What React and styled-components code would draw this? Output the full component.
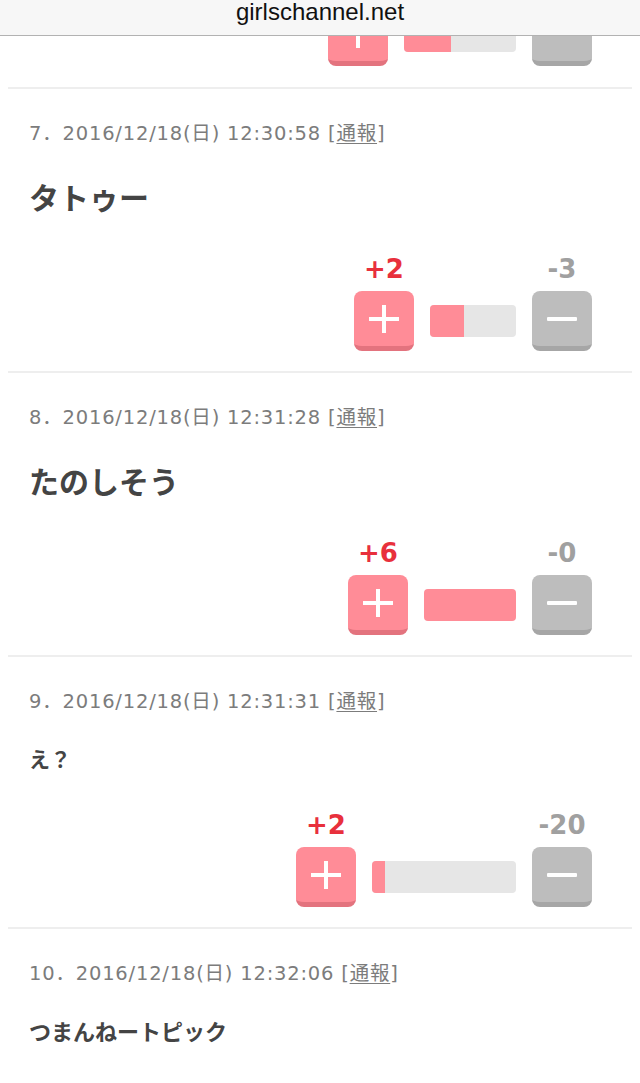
import { createGlobalStyle, styled } from "styled-components";

const comments = [
  { no: 7, time: "2016/12/18(日) 12:30:58", body: "タトゥー", size: 30, plus: 2, minus: 3, bar: 86 },
  { no: 8, time: "2016/12/18(日) 12:31:28", body: "たのしそう", size: 30, plus: 6, minus: 0, bar: 92 },
  { no: 9, time: "2016/12/18(日) 12:31:31", body: "え？", size: 21, plus: 2, minus: 20, bar: 144 },
  { no: 10, time: "2016/12/18(日) 12:32:06", body: "つまんねートピック", size: 22 },
];

const PlusIcon = () => (
  <svg width="30" height="28" viewBox="0 0 30 28">
    <rect x="0" y="12" width="30" height="4" fill="#fff" />
    <rect x="13" y="0" width="4" height="28" fill="#fff" />
  </svg>
);

const MinusIcon = () => (
  <svg width="30" height="4" viewBox="0 0 30 4">
    <rect x="0" y="0" width="30" height="4" rx="1" fill="#fff" />
  </svg>
);

const Votes = ({ plus, minus, bar }) => {
  const total = plus + minus;
  const pct = total === 0 ? 50 : (plus / total) * 100;
  return (
    <StVoteRow>
      <StVoteGroup>
        <StCount $plus>+{plus}</StCount>
        <StVoteBtn $plus>
          <PlusIcon />
        </StVoteBtn>
      </StVoteGroup>
      <StBar style={{ width: bar }}>
        <StBarFill style={{ width: `${pct}%` }} />
      </StBar>
      <StVoteGroup>
        <StCount>-{minus}</StCount>
        <StVoteBtn>
          <MinusIcon />
        </StVoteBtn>
      </StVoteGroup>
    </StVoteRow>
  );
};

const App = () => {
  return (
    <>
      <GlobalStyle />
      <StTopBar>girlschannel.net</StTopBar>
      <StList>
        <StPartial>
          <StClip>
            <Votes plus={5} minus={7} bar={112} />
          </StClip>
        </StPartial>
        {comments.map((c) => (
          <StComment key={c.no}>
            <StHeader>
              {c.no}．{c.time} [<StReport>通報</StReport>]
            </StHeader>
            <StBody $size={c.size}>{c.body}</StBody>
            {c.plus !== undefined && (
              <Votes plus={c.plus} minus={c.minus} bar={c.bar} />
            )}
          </StComment>
        ))}
      </StList>
    </>
  );
};

const GlobalStyle = createGlobalStyle`
  body {
    margin: 0;
    background: #fff;
    font-family: "Noto Sans CJK JP", "Noto Sans", sans-serif;
  }
`;

const StTopBar = styled.div`
  height: 35px;
  border-bottom: 1px solid #b2b2b2;
  background-color: #f7f7f7;

  font-family: "Liberation Sans", Arial, sans-serif;
  font-size: 24px;
  line-height: 24px;
  text-align: center;
  color: #111;
`;

const StList = styled.div`
  margin: 0 8px;
`;

const StPartial = styled.div`
  padding: 0 40px 21px 21px;
  border-bottom: 2px solid #eeeeee;
`;

const StClip = styled.div`
  display: flex;
  flex-direction: column;
  justify-content: flex-end;
  height: 30px;
  overflow: hidden;
`;

const StComment = styled.div`
  padding: 30px 40px 20px 21px;
  border-bottom: 2px solid #eeeeee;

  &:last-child {
    border-bottom: none;
  }
`;

const StHeader = styled.div`
  height: 26px;
  overflow: hidden;

  font-family: "DejaVu Sans", "Noto Sans CJK JP", sans-serif;
  font-size: 19.5px;
  line-height: 26px;
  letter-spacing: 0.8px;
  white-space: nowrap;
  color: #7c7c7c;
`;

const StReport = styled.span`
  font-family: "Noto Sans CJK JP", sans-serif;
  text-decoration: underline;
  text-underline-offset: 3px;
  text-decoration-thickness: 1px;
`;

const StBody = styled.div`
  height: ${(p) => (p.$size > 24 ? 40 : 28)}px;
  margin-top: 31px;

  font-size: ${(p) => p.$size}px;
  font-weight: 700;
  line-height: ${(p) => (p.$size > 24 ? 40 : 28)}px;
  color: #444;
`;

const StVoteRow = styled.div`
  display: flex;
  justify-content: flex-end;
  align-items: flex-end;
  gap: 16px;

  margin-top: 39px;
`;

const StVoteGroup = styled.div`
  display: flex;
  flex-direction: column;
  align-items: center;
  gap: 8px;

  width: 60px;
`;

const StCount = styled.div`
  height: 28px;

  font-family: "DejaVu Sans", sans-serif;
  font-size: 26px;
  font-weight: 700;
  line-height: 28px;
  white-space: nowrap;
  color: ${(p) => (p.$plus ? "#e8303c" : "#a0a0a0")};
`;

const StVoteBtn = styled.div`
  display: flex;
  justify-content: center;
  align-items: center;
  box-sizing: border-box;

  width: 60px;
  height: 60px;

  background-color: ${(p) => (p.$plus ? "#ff8c97" : "#bdbdbd")};
  border-bottom: 5px solid ${(p) => (p.$plus ? "#e3737e" : "#a6a6a6")};
  border-radius: 8px;
`;

const StBar = styled.div`
  height: 32px;
  margin-bottom: 14px;

  background-color: #e6e6e6;
  border-radius: 4px;
  overflow: hidden;
`;

const StBarFill = styled.div`
  height: 100%;
  background-color: #ff8c97;
`;

export default App;
